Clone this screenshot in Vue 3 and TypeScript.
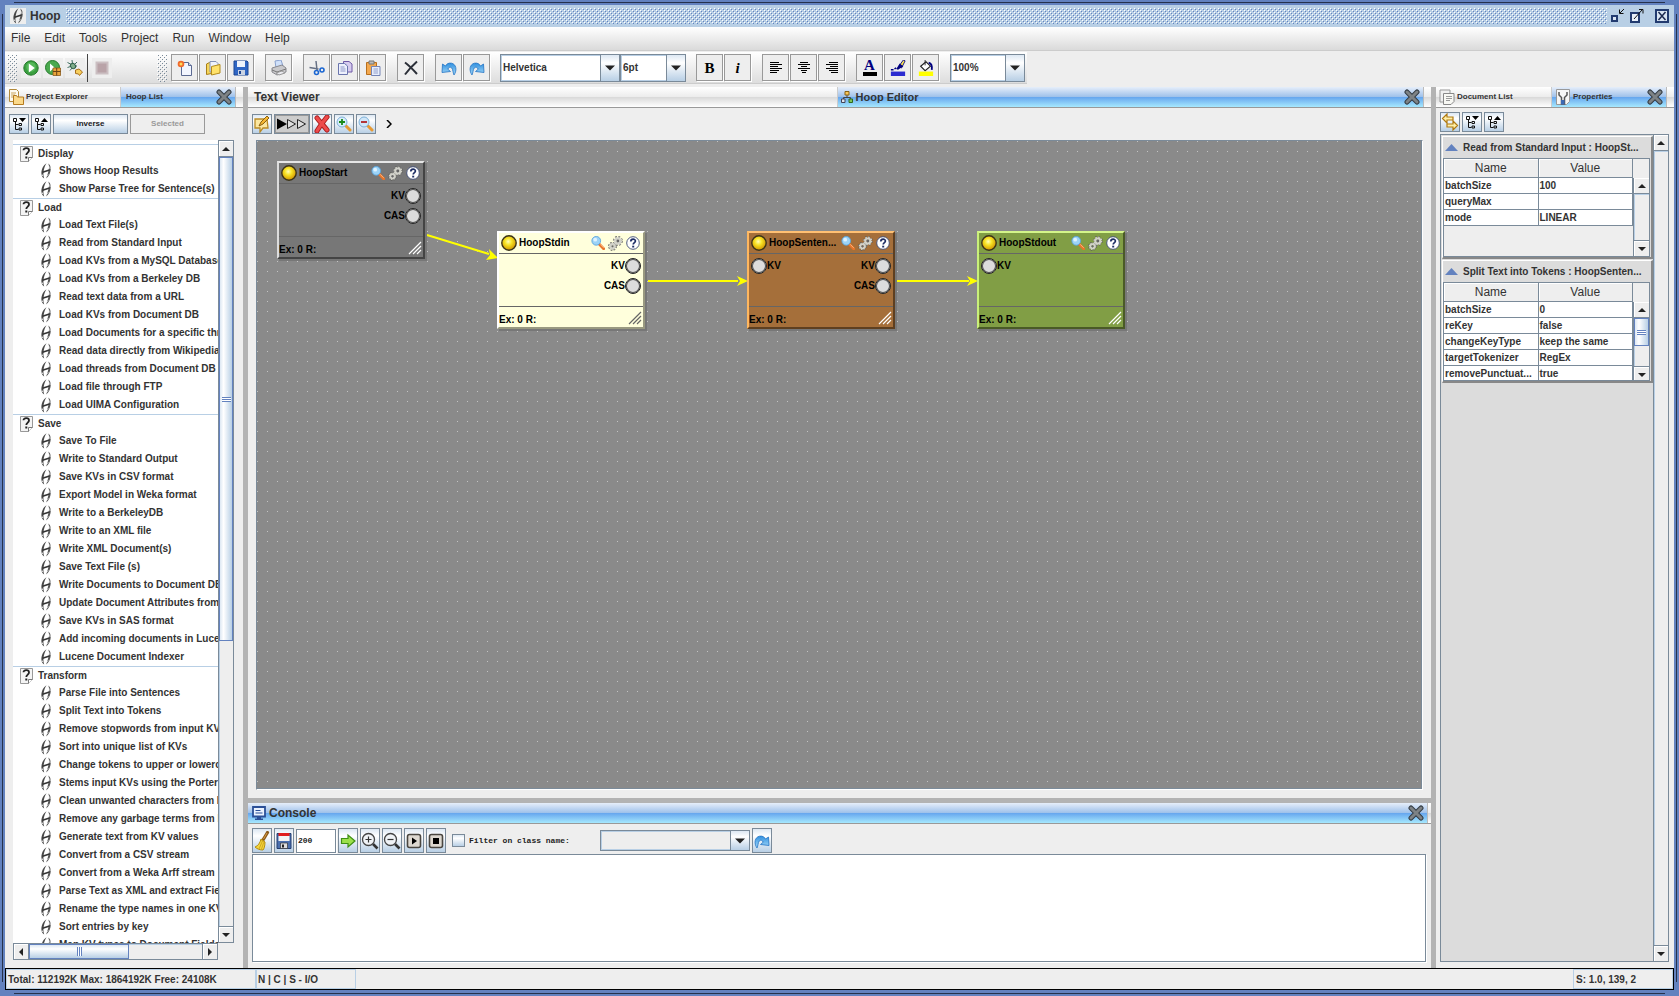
<script setup lang="ts">
import { ref } from 'vue'

interface Group { name: string; items: string[] }
interface HoopNode { id: string; name: string; x: number; y: number; theme: string; inputs: string[]; outputs: string[] }
interface Sheet { title: string; rows: [string, string][]; thumb: boolean }

const menus = ['File', 'Edit', 'Tools', 'Project', 'Run', 'Window', 'Help']

const groups: Group[] = [
  { name: 'Display', items: ['Shows Hoop Results', 'Show Parse Tree for Sentence(s)'] },
  {
    name: 'Load',
    items: ['Load Text File(s)', 'Read from Standard Input', 'Load KVs from a MySQL Database', 'Load KVs from a Berkeley DB',
      'Read text data from a URL', 'Load KVs from Document DB', 'Load Documents for a specific thread', 'Read data directly from Wikipedia',
      'Load threads from Document DB', 'Load file through FTP', 'Load UIMA Configuration'],
  },
  {
    name: 'Save',
    items: ['Save To File', 'Write to Standard Output', 'Save KVs in CSV format', 'Export Model in Weka format', 'Write to a BerkeleyDB',
      'Write to an XML file', 'Write XML Document(s)', 'Save Text File (s)', 'Write Documents to Document DB',
      'Update Document Attributes from KVs', 'Save KVs in SAS format', 'Add incoming documents in Lucene', 'Lucene Document Indexer'],
  },
  {
    name: 'Transform',
    items: ['Parse File into Sentences', 'Split Text into Tokens', 'Remove stopwords from input KVs', 'Sort into unique list of KVs',
      'Change tokens to upper or lowercase', 'Stems input KVs using the Porter', 'Clean unwanted characters from KVs',
      'Remove any garbage terms from KVs', 'Generate text from KV values', 'Convert from a CSV stream', 'Convert from a Weka Arff stream',
      'Parse Text as XML and extract Fields', 'Rename the type names in one KV', 'Sort entries by key', 'Map KV types to Document Fields'],
  },
]

const fileTools = [
  [['new', 'New'], ['open', 'Open'], ['save', 'Save']],
  [['print', 'Print']],
  [['cut', 'Cut'], ['copy', 'Copy'], ['paste', 'Paste']],
  [['delete', 'Delete']],
]
const textTools = [
  [['bold', 'Bold'], ['italic', 'Italic']],
  [['al', 'Align left'], ['ac', 'Align center'], ['ar', 'Align right']],
  [['fcolor', 'Font color'], ['pen', 'Highlight'], ['fill', 'Fill']],
]

const nodes: HoopNode[] = [
  { id: 'a', name: 'HoopStart', x: 20, y: 20, theme: 'gray', inputs: [], outputs: ['KV', 'CAS'] },
  { id: 'b', name: 'HoopStdin', x: 240, y: 90, theme: 'cream', inputs: [], outputs: ['KV', 'CAS'] },
  { id: 'c', name: 'HoopSenten...', x: 490, y: 90, theme: 'brown', inputs: ['KV'], outputs: ['KV', 'CAS'] },
  { id: 'd', name: 'HoopStdout', x: 720, y: 90, theme: 'green', inputs: ['KV'], outputs: [] },
]

const sheets: Sheet[] = [
  { title: 'Read from Standard Input : HoopSt...', rows: [['batchSize', '100'], ['queryMax', ''], ['mode', 'LINEAR']], thumb: false },
  {
    title: 'Split Text into Tokens : HoopSenten...',
    rows: [['batchSize', '0'], ['reKey', 'false'], ['changeKeyType', 'keep the same'], ['targetTokenizer', 'RegEx'], ['removePunctuat...', 'true']],
    thumb: true,
  },
]

const lines = ref('200')
const filterOn = ref(false)
</script>

<template>
  <svg class="defs" aria-hidden="true">
    <defs>
      <radialGradient id="lampFill" cx=".45" cy=".4" r=".6"><stop offset="0" stop-color="#fffdb8" /><stop offset=".4" stop-color="#f8e425" /><stop offset="1" stop-color="#cf9200" /></radialGradient>
      <linearGradient id="arrowBlue" x2="0" y2="1"><stop offset="0" stop-color="#2f8fdf" /><stop offset="1" stop-color="#a8dcfa" /></linearGradient>
    </defs>
    <symbol id="hoop" viewBox="0 0 10 16">
      <path d="M5.500.300C2 2.500.2 7 .4 10.500.5 13 1.800 15 3.200 15.500 2.300 13 2.300 10.500 2.600 8.500 3 5.500 4 2.500 5.500.300z" fill="#484848" />
      <path d="M7.200.600C9.800 2.200 10.200 5.500 9.400 8.500 8.700 11.500 7 14.200 5 15.600 6.200 13 6.800 10.500 7.400 8 8.200 5 8.400 2.800 7.200.600z" fill="#565656" />
      <path d="M1.500 9.300l7-2.300" stroke="#333" stroke-width="1.600" />
      <path d="M8.700 3.500l.4 2.500M7.300 11.500l-.8 1.300M1.300 11.500l.4 1.500" stroke="#fff" stroke-width=".8" fill="none" />
    </symbol>
    <symbol id="qdoc" viewBox="0 0 13 16">
      <path d="M.5.500h12v11l-4 4h-8z" fill="#f4f4f4" stroke="#999" /><path d="M8.500 15.500v-4h4" fill="#fff" stroke="#777" />
      <path d="M3.500 4.200C3.500 1.500 9 1.500 9 4.500 9 6.500 6.300 6.700 6.300 9" fill="none" stroke="#222" stroke-width="1.800" /><path d="M5.300 10.500h2v2h-2z" fill="#222" />
    </symbol>
    <symbol id="run" viewBox="0 0 16 16"><circle cx="8" cy="8" r="7.200" fill="#3a9f3f" stroke="#257a2b" /><circle cx="8" cy="7" r="4.800" fill="#55b85a" /><path d="M5.800 3.500L11.800 8l-6 4.500z" fill="#fff" /></symbol>
    <symbol id="runbox" viewBox="0 0 16 16"><circle cx="7.500" cy="7.500" r="7" fill="#4aa94e" stroke="#257a2b" /><path d="M5 3.500L9.500 7.500 5 11.500z" fill="#fff" /><path d="M8 8h7.500v7.500H8z" fill="#e8a33a" stroke="#8a5a1c" stroke-width=".8" /><path d="M8 11.500h7.500M11.700 8v7.500" stroke="#6a4213" /></symbol>
    <symbol id="bug" viewBox="0 0 16 16"><path d="M.5 2.500l4 2M5 0l.5 4M10 2L7 5M.5 7.500l3-1M3 10.500l2-2.500M10 6H7" stroke="#3f6f60" /><ellipse cx="6" cy="6" rx="2.400" ry="2.800" transform="rotate(-40 6 6)" fill="#7fae8a" stroke="#2f5f4a" /><path d="M8.500 10L12 9l3.500 3-3 3.500-1-1.500-3-.5z" fill="#f7cf5e" stroke="#a8701c" /></symbol>
    <symbol id="stop" viewBox="0 0 16 16"><path d="M2.500 2.500h11v11h-11z" fill="#b9a3a8" stroke="#cbbfc2" stroke-width="2" /></symbol>
    <symbol id="new" viewBox="0 0 16 16"><path d="M4.500 2.500h7l3 3v10h-10z" fill="#f3f6ff" stroke="#5c6a92" /><path d="M11.500 2.500v3h3" fill="#cfd7ee" stroke="#5c6a92" /><circle cx="4" cy="4" r="3.300" fill="#f06a2c" /><circle cx="4" cy="4" r="1.500" fill="#ffd95a" /></symbol>
    <symbol id="open" viewBox="0 0 16 16"><path d="M1.500 4l3-1.500 2 1v10l-5 1z" fill="#f5d55a" stroke="#a87f1a" /><path d="M5 1.500h6l2 2V12H5z" fill="#eef2fb" stroke="#8592b5" /><path d="M6.500 6.500l8.500-2v8.500l-8.500 2z" fill="#ffe26a" stroke="#b38b1d" /></symbol>
    <symbol id="save" viewBox="0 0 16 16"><path d="M1 1h13l1 1v13H1z" fill="#2f66c4" stroke="#1d4693" /><path d="M4 1h8v6H4z" fill="#eef3fb" /><path d="M5 10h7v5H5z" fill="#c9d3e3" /><path d="M6 11h2v3H6z" fill="#1d4693" /></symbol>
    <symbol id="print" viewBox="0 0 16 16"><path d="M4 1l6-1 2 6-7 2z" fill="#cfe0fa" stroke="#8aa2cf" /><path d="M1 8l10-3 4 3v4l-9 3-5-3z" fill="#c9c9cc" stroke="#88888e" /><path d="M1 10l5 2 9-3" fill="none" stroke="#777" /><path d="M5 13l6-2 3 2-6 2z" fill="#e9e9ee" stroke="#999" /></symbol>
    <symbol id="cut" viewBox="0 0 16 16"><path d="M7 1l1 9M.5 7.500l9 1.500" stroke="#667084" stroke-width="1.500" /><circle cx="7.500" cy="12.500" r="2" fill="none" stroke="#1c67d2" stroke-width="1.600" /><circle cx="13" cy="10" r="2" fill="none" stroke="#1c67d2" stroke-width="1.600" /></symbol>
    <symbol id="copy" viewBox="0 0 16 16"><path d="M6.500 1.500h5.500l3 2.500v8H6.500z" fill="#d6ccef" stroke="#6e58a6" /><path d="M1.500 3.500h6l3 2.500v8.500h-9z" fill="#edf0fc" stroke="#6a75ad" /><path d="M3.500 7h4M3.500 9h5M3.500 11h5" stroke="#8d97c9" /></symbol>
    <symbol id="paste" viewBox="0 0 16 16"><path d="M1.500 2.500h10v12h-10z" fill="#f3a84e" stroke="#b86f1d" /><path d="M4 1h5v3H4z" fill="#bbb" stroke="#777" /><path d="M6.500 6.500H15v9H6.500z" fill="#e8eefc" stroke="#7584b5" /><path d="M8.500 9h4.500M8.500 11h4.500M8.500 13h4.500" stroke="#93a0cc" /></symbol>
    <symbol id="delete" viewBox="0 0 16 16"><path d="M2 2.500c4 3 8 7 12 11.500M14 1.500C9 6 6 9 2 14.500" stroke="#2b2f38" stroke-width="2" fill="none" /></symbol>
    <symbol id="undo" viewBox="0 0 16 16"><path d="M13 15c3.500-5 2-11-2.500-11.800C7.500 2.700 5.500 4 4.500 6L1.500 4 1 12.500l8.500-1-2.700-2.300C7.500 7.200 9.500 6.500 10.800 8c1.300 1.700 1 4.500 2.200 7z" fill="url(#arrowBlue)" stroke="#2374c4" stroke-width=".8" /></symbol>
    <symbol id="redo" viewBox="0 0 16 16"><path d="M3 15C-.5 10 1 4 5.500 3.200 8.500 2.700 10.500 4 11.500 6l3-2 .5 8.500-8.500-1 2.700-2.300C8.500 7.200 6.500 6.500 5.200 8 3.900 9.700 4.200 12.500 3 15z" fill="url(#arrowBlue)" stroke="#2374c4" stroke-width=".8" /></symbol>
    <symbol id="al" viewBox="0 0 16 16"><path d="M2 2.500h9M2 4.500h12M2 6.500h8M2 8.500h12M2 10.500h9M2 12.500h7" stroke="#000" /></symbol>
    <symbol id="ac" viewBox="0 0 16 16"><path d="M4 2.500h8M2 4.500h12M5 6.500h6M2 8.500h12M5 10.500h6M6 12.500h4" stroke="#000" /></symbol>
    <symbol id="ar" viewBox="0 0 16 16"><path d="M5 2.500h9M2 4.500h12M6 6.500h8M2 8.500h12M5 10.500h9M7 12.500h7" stroke="#000" /></symbol>
    <symbol id="pen" viewBox="0 0 18 18"><path d="M10 7l5-7 2 1-4 8z" fill="#ffe94a" stroke="#000080" /><path d="M7 10l4-6 4 3-6 4z" fill="#000080" /><path d="M1 11h3M5 10l2-1" stroke="#000080" stroke-width="1.600" /><path d="M1 13h16v5H1z" fill="#2b2bd0" /></symbol>
    <symbol id="fill" viewBox="0 0 18 18"><path d="M3 7l6-5 5 5-6 5z" fill="#fff" stroke="#222" stroke-width="1.200" /><path d="M8 0v6" stroke="#222" /><path d="M12 3c4 1 4 4 3.500 8" fill="none" stroke="#000080" stroke-width="2" /><path d="M1 13h16v5H1z" fill="#ff0" /></symbol>
    <symbol id="folders" viewBox="0 0 16 16"><path d="M1.500.5h7l2 2v10h-9z" fill="#fdfaf0" stroke="#b38a3a" /><path d="M3 4h5M3 6h4M3 8h3" stroke="#c9a45a" /><path d="M5.500 6.500h3l1 1.500h6v7.500h-10z" fill="#fbd98a" stroke="#b57a1e" /></symbol>
    <symbol id="docs" viewBox="0 0 16 16"><path d="M1 1h10v12H1z" fill="#f0f0f0" stroke="#999" /><path d="M4.500 4.500H15v8l-3 3H4.500z" fill="#f8f8f4" stroke="#888" /><path d="M7 7.500h6M7 9.500h6M7 11.500h4" stroke="#999" /></symbol>
    <symbol id="wrench" viewBox="0 0 16 16"><path d="M1.500.5h13v12l-3 3h-10z" fill="#f6f6f6" stroke="#999" /><path d="M4 3v3l2.500 2.500V15h3V8.500L12 6V3" fill="none" stroke="#555" stroke-width="1.500" /><path d="M6 11h3.500v4.500H6z" fill="#3c6ab5" /></symbol>
    <symbol id="cross" viewBox="0 0 16 16"><path d="M3 3l10 10M13 3L3 13" stroke="#343c44" stroke-width="5" stroke-linecap="round" /><path d="M3 3l10 10M13 3L3 13" stroke="#7d8285" stroke-width="3" stroke-linecap="round" /></symbol>
    <symbol id="treed" viewBox="0 0 16 16"><path d="M2.500 2.500h3v3h-3zM4.500 6v7.500h3M4.500 8.500h3M8 7.500h2.500v2H8zM8 12h2.500v2H8z" fill="none" stroke="#111" /><path d="M8 2h7l-3.500 4z" fill="#000" /></symbol>
    <symbol id="treeu" viewBox="0 0 16 16"><path d="M2.500 2.500h3v3h-3zM4.500 6v7.500h3M4.500 8.500h3M8 7.500h2.500v2H8zM8 12h2.500v2H8z" fill="none" stroke="#111" /><path d="M8 6h7l-3.500-4z" fill="#000" /></symbol>
    <symbol id="swap" viewBox="0 0 18 18"><path d="M1.500 5.500L6 1v3h6v3H6v3zM16.500 12.500L12 8v3H6v3h6v3z" fill="#fff0a8" stroke="#b07a12" stroke-width="1.200" /></symbol>
    <symbol id="note" viewBox="0 0 18 18"><path d="M2 4h12l1 9h-5l-3 4v-4H2z" fill="#fbe7a0" stroke="#b98a26" stroke-width="1.300" /><path d="M6 11l2-4 6-6 2 2-6 6z" fill="#f5b732" stroke="#8a5f10" /></symbol>
    <symbol id="redx" viewBox="0 0 18 18"><path d="M4 3c3 4 7 8 10 12M14 2C10 7 7 11 4 16" stroke="#a81c1c" stroke-width="5" stroke-linecap="round" /><path d="M4 3c3 4 7 8 10 12M14 2C10 7 7 11 4 16" stroke="#ee4b4b" stroke-width="3.200" stroke-linecap="round" fill="none" /></symbol>
    <symbol id="mag" viewBox="0 0 16 16"><path d="M9.500 9.500l5 5" stroke="#e8742a" stroke-width="3.200" stroke-linecap="round" /><path d="M10.500 9.500l4 4" stroke="#ffc08a" /><circle cx="6" cy="5.500" r="5" fill="#9cd3f7" stroke="#5aa3dc" /><circle cx="4.800" cy="4.200" r="2.200" fill="#def2ff" /></symbol>
    <symbol id="zin" viewBox="0 0 16 16"><path d="M10 10l4 4" stroke="#e79a33" stroke-width="3" stroke-linecap="round" /><circle cx="6" cy="6" r="5" fill="#d8edfb" stroke="#7db0d8" /><path d="M3 6h6M6 3v6" stroke="#1a8a1a" stroke-width="1.800" /></symbol>
    <symbol id="zout" viewBox="0 0 16 16"><path d="M10 10l4 4" stroke="#e79a33" stroke-width="3" stroke-linecap="round" /><circle cx="6" cy="6" r="5" fill="#cfe6f8" stroke="#7db0d8" /><path d="M3 6h6" stroke="#b02222" stroke-width="1.800" /></symbol>
    <symbol id="gears" viewBox="0 0 16 16">
      <g fill="none" stroke="#5e5e5a"><circle cx="10.500" cy="5.300" r="4.300" stroke-width="2" stroke-dasharray="1.900 1.480" /><circle cx="4.800" cy="11" r="3.700" stroke-width="2" stroke-dasharray="1.700 1.200" /></g>
      <g fill="none" stroke="#d2d2ca"><circle cx="10.500" cy="5.300" r="3.900" stroke-width="1.600" stroke-dasharray="1.500 1.560" /><circle cx="10.500" cy="5.300" r="2.600" stroke-width="2.400" /><circle cx="4.800" cy="11" r="3.200" stroke-width="1.600" stroke-dasharray="1.300 1.210" /><circle cx="4.800" cy="11" r="2.200" stroke-width="2" /></g>
      <circle cx="10.500" cy="5.300" r="1.500" fill="#666" /><circle cx="4.800" cy="11" r="1.200" fill="#666" />
    </symbol>
    <symbol id="help" viewBox="0 0 14 14"><circle cx="7" cy="7" r="6.300" fill="#fff" stroke="#3c4a74" stroke-width=".9" /><path d="M4.800 5.500c0-3 4.600-3 4.600-.4C9.400 6.700 7.200 6.600 7.200 8.600" fill="none" stroke="#1f2f66" stroke-width="1.700" /><path d="M6.200 9.700h2v1.800h-2z" fill="#1f2f66" /></symbol>
    <symbol id="lamp" viewBox="0 0 16 16"><circle cx="8" cy="8" r="7.200" fill="url(#lampFill)" stroke="#3c3418" stroke-width="1.400" /></symbol>
    <symbol id="grip" viewBox="0 0 14 14"><path d="M1 13L13 1M5 13l8-8M9 13l4-4" stroke="currentColor" stroke-width="1.200" /></symbol>
    <symbol id="orgchart" viewBox="0 0 12 12"><path d="M6 4v2.500M2.500 8V6.500h7V8" fill="none" stroke="#444" /><path d="M4 .5h4v3.500H4z" fill="#f7c65a" stroke="#8a6212" /><path d="M.5 8H4v3.500H.5z" fill="#dfe6ee" stroke="#445" /><path d="M8 8h3.500v3.500H8z" fill="#7fc45a" stroke="#2d6a1d" /></symbol>
    <symbol id="monitor" viewBox="0 0 14 14"><path d="M1 1h12v9.500H1z" fill="#eaf2ff" stroke="#2b4f97" stroke-width="1.800" /><path d="M3.500 4.500h5M3.500 7h7" stroke="#2b4f97" /><path d="M5 11h4v1.500H5zM3 12.500h8V14H3z" fill="#2b4f97" /></symbol>
    <symbol id="broom" viewBox="0 0 16 20"><path d="M13.500 1.500L9 9" stroke="#8a5a1a" stroke-width="3.200" stroke-linecap="round" /><path d="M13 2L9.500 8" stroke="#d79b45" /><path d="M7 8l4 3c0 4-1 7-2 8-3 0-6-1-8-3 3-1 5-4 6-8z" fill="#f5d63a" stroke="#b58e10" /><path d="M8 11l-3 7M9.500 12l-2 6M7 9.500l4 2.500" stroke="#c79d1e" stroke-width=".8" /></symbol>
    <symbol id="disk" viewBox="0 0 16 18"><path d="M1 1.500h14v15H1z" fill="#4a6fae" stroke="#223c6e" /><path d="M2.500 1h11v3h-11z" fill="#e01b1b" /><path d="M2.500 4h11v5h-11z" fill="#f2f2f2" /><path d="M4.500 11h7v5.500h-7z" fill="#dcdcdc" stroke="#333" stroke-width=".7" /><path d="M6 12.500h2v3H6z" fill="#222" /></symbol>
    <symbol id="goright" viewBox="0 0 16 16"><path d="M1.500 5.500H8V2l7 6-7 6v-3.500H1.500z" fill="#9be04a" stroke="#3f8f14" stroke-width="1.200" /></symbol>
    <symbol id="gzin" viewBox="0 0 18 18"><path d="M12 12l4.500 4.500" stroke="#333" stroke-width="2.600" /><circle cx="7.500" cy="7.500" r="6" fill="#f0f3f6" stroke="#444" stroke-width="1.300" /><path d="M4.500 7.500h6M7.500 4.500v6" stroke="#333" stroke-width="1.200" /></symbol>
    <symbol id="gzout" viewBox="0 0 18 18"><path d="M12 12l4.500 4.500" stroke="#333" stroke-width="2.600" /><circle cx="7.500" cy="7.500" r="6" fill="#f0f3f6" stroke="#444" stroke-width="1.300" /><path d="M4.500 7.500h6" stroke="#333" stroke-width="1.200" /></symbol>
    <symbol id="bplay" viewBox="0 0 16 16"><rect x="1.500" y="1.500" width="13" height="13" rx="2" fill="#ddd8d0" stroke="#4a4640" stroke-width="1.600" /><path d="M6 4.500l5 3.500-5 3.500z" /></symbol>
    <symbol id="bstop" viewBox="0 0 16 16"><rect x="1.500" y="1.500" width="13" height="13" rx="2" fill="#ddd8d0" stroke="#4a4640" stroke-width="1.600" /><path d="M5 5h6v6H5z" /></symbol>
    <symbol id="steps" viewBox="0 0 32 16"><path d="M1 2.500l10 5.500-10 5.500z" /><path d="M11.500 3.500l8 4.500-8 4.500zM21.500 3.500l8 4.500-8 4.500z" fill="#ddd" stroke="#222" /></symbol>
    <symbol id="minimize" viewBox="0 0 16 16"><path d="M2 8h5v5H2z" fill="#d7e3f2" stroke="#223b70" stroke-width="2" /><path d="M14 1l-4 4M9.500 1.500v4h4" fill="none" stroke="#111" /></symbol>
    <symbol id="maximize" viewBox="0 0 16 16"><path d="M2 5h8v9H2z" fill="#e8f0fa" stroke="#223b70" stroke-width="2" /><path d="M5 11l8-9M10 1.500h4v4" fill="none" stroke="#111" /></symbol>
    <symbol id="winclose" viewBox="0 0 16 16"><path d="M2 2h12v12H2z" fill="#d9e5f3" stroke="#223b70" stroke-width="2" /><path d="M4.500 4l7 8M11.500 4l-7 8" stroke="#1c2a50" stroke-width="1.500" /></symbol>
    <symbol id="up" viewBox="0 0 8 4"><path d="M0 4l4-4 4 4z" fill="#222" /></symbol>
    <symbol id="down" viewBox="0 0 8 4"><path d="M0 0l4 4 4-4z" fill="#222" /></symbol>
  </svg>

  <div class="frame">
    <header class="title">
      <span class="logo"><svg width="10" height="16"><use href="#hoop" /></svg></span>
      <h1>Hoop</h1>
      <span class="bumps grow"></span>
      <button class="win" aria-label="Minimize"><svg width="16" height="16"><use href="#minimize" /></svg></button>
      <button class="win" aria-label="Maximize"><svg width="16" height="16"><use href="#maximize" /></svg></button>
      <button class="win last" aria-label="Close"><svg width="16" height="16"><use href="#winclose" /></svg></button>
    </header>

    <nav class="menubar"><button v-for="m in menus" :key="m">{{ m }}</button></nav>

    <div class="toolbars">
      <div class="runbar">
        <span class="bumps handle"></span>
        <button class="flat" aria-label="Run"><svg width="16" height="16"><use href="#run" /></svg></button>
        <button class="flat" aria-label="Run project"><svg width="16" height="16"><use href="#runbox" /></svg></button>
        <button class="flat" aria-label="Debug"><svg width="16" height="16"><use href="#bug" /></svg></button>
        <span class="sep"></span>
        <button class="flat" aria-label="Stop" disabled><svg width="16" height="16"><use href="#stop" /></svg></button>
      </div>
      <span class="bumps handle"></span>
      <div class="group" v-for="(g, i) in fileTools" :key="i">
        <button class="tool" v-for="t in g" :key="t[0]" :aria-label="t[1]"><svg width="16" height="16"><use :href="'#' + t[0]" /></svg></button>
      </div>
      <div class="group">
        <button class="tool" aria-label="Undo"><svg width="16" height="16"><use href="#undo" /></svg></button>
        <button class="tool" aria-label="Redo"><svg width="16" height="16"><use href="#redo" /></svg></button>
      </div>
      <div class="group tight">
        <label class="combo font"><select aria-label="Font"><option>Helvetica</option></select><span><svg width="10" height="6"><use href="#down" /></svg></span></label>
        <label class="combo size"><select aria-label="Font size"><option>6pt</option></select><span><svg width="10" height="6"><use href="#down" /></svg></span></label>
      </div>
      <div class="group" v-for="(g, i) in textTools" :key="'t' + i">
        <button class="tool" v-for="t in g" :key="t[0]" :aria-label="t[1]">
          <b v-if="t[0] === 'bold'" class="glyph">B</b>
          <b v-else-if="t[0] === 'italic'" class="glyph it">i</b>
          <b v-else-if="t[0] === 'fcolor'" class="glyph fc">A</b>
          <svg v-else width="16" height="16"><use :href="'#' + t[0]" /></svg>
        </button>
      </div>
      <label class="combo zoom"><select aria-label="Zoom"><option>100%</option></select><span><svg width="10" height="6"><use href="#down" /></svg></span></label>
    </div>

    <main class="panes">
      <section class="side left">
        <div class="tabs">
          <button class="tab small"><svg width="16" height="16"><use href="#folders" /></svg>Project Explorer</button>
          <button class="tab small plain on">Hoop List<svg class="x" width="16" height="16"><use href="#cross" /></svg></button>
          <span class="tab rest"></span>
        </div>
        <div class="bar">
          <button class="btn" aria-label="Collapse"><svg width="16" height="16"><use href="#treed" /></svg></button>
          <button class="btn" aria-label="Expand"><svg width="16" height="16"><use href="#treeu" /></svg></button>
          <button class="btn word">Inverse</button>
          <button class="btn word" disabled>Selected</button>
        </div>
        <div class="treebox">
          <ul class="tree">
            <li v-for="g in groups" :key="g.name">
              <div class="cat"><svg width="13" height="16"><use href="#qdoc" /></svg>{{ g.name }}</div>
              <ul>
                <li class="leaf" v-for="i in g.items" :key="i"><svg width="10" height="16"><use href="#hoop" /></svg>{{ i }}</li>
              </ul>
            </li>
          </ul>
          <div class="vscroll">
            <button aria-label="Scroll up"><svg width="8" height="4"><use href="#up" /></svg></button>
            <div class="track"><div class="thumb tall"><i></i></div></div>
            <button aria-label="Scroll down"><svg width="8" height="4"><use href="#down" /></svg></button>
          </div>
          <div class="hscroll">
            <button aria-label="Scroll left"><svg width="4" height="8" viewBox="0 0 4 8"><path d="M4 0v8L0 4z" fill="#222" /></svg></button>
            <div class="track"><div class="thumb"><i></i></div></div>
            <button aria-label="Scroll right"><svg width="4" height="8" viewBox="0 0 4 8"><path d="M0 0v8l4-4z" fill="#222" /></svg></button>
          </div>
        </div>
      </section>
      <div class="split"></div>

      <section class="center">
        <div class="editor">
          <div class="tabs">
            <button class="tab half">Text Viewer</button>
            <button class="tab half on ed"><svg width="12" height="12"><use href="#orgchart" /></svg>Hoop Editor<svg class="x" width="16" height="16"><use href="#cross" /></svg></button>
            <span class="tab rest"></span>
          </div>
          <div class="bar">
            <button class="btn" aria-label="Note"><svg width="18" height="18"><use href="#note" /></svg></button>
            <button class="btn steps" aria-label="Step"><svg width="32" height="16"><use href="#steps" /></svg></button>
            <button class="btn" aria-label="Remove"><svg width="18" height="18"><use href="#redx" /></svg></button>
            <button class="btn" aria-label="Zoom in"><svg width="16" height="16"><use href="#zin" /></svg></button>
            <button class="btn" aria-label="Zoom out"><svg width="16" height="16"><use href="#zout" /></svg></button>
            <svg class="more" width="6" height="8" viewBox="0 0 6 8"><path d="M1 0l4 4-4 4" fill="none" stroke="#000" stroke-width="1.500" /></svg>
          </div>
          <div class="canvas">
            <svg class="edges" width="100%" height="100%">
              <g stroke="#ff0" stroke-width="2"><path d="M170 94l62 19M391 140h90M640 140h72" /></g>
              <g fill="#ff0"><path d="M241 117l-12 2 4-5-1-6zM491 140l-11 5 3-5-3-5zM721 140l-11 5 3-5-3-5z" /></g>
            </svg>
            <article v-for="n in nodes" :key="n.id" class="node" :class="n.theme" :style="{ left: n.x + 'px', top: n.y + 'px' }">
              <div class="nhead">
                <svg width="16" height="16"><use href="#lamp" /></svg><span>{{ n.name }}</span>
                <svg width="14" height="14"><use href="#mag" /></svg>
                <svg width="15" height="15"><use href="#gears" /></svg>
                <svg width="14" height="14"><use href="#help" /></svg>
              </div>
              <div class="nbody">
                <div class="ports"><span v-for="p in n.inputs" :key="p"><i></i>{{ p }}</span></div>
                <div class="ports out"><span v-for="p in n.outputs" :key="p">{{ p }}<i></i></span></div>
              </div>
              <div class="nfoot">Ex: 0 R:<svg width="14" height="14"><use href="#grip" /></svg></div>
            </article>
          </div>
        </div>
        <div class="split"></div>
        <div class="console">
          <div class="tabs">
            <button class="tab on wide"><svg width="14" height="14"><use href="#monitor" /></svg>Console<svg class="x" width="16" height="16"><use href="#cross" /></svg></button>
            <span class="tab rest thin"></span>
          </div>
          <div class="bar cbar">
            <button class="btn" aria-label="Clear"><svg width="16" height="20"><use href="#broom" /></svg></button>
            <button class="btn" aria-label="Save log"><svg width="16" height="18"><use href="#disk" /></svg></button>
            <input class="lines" aria-label="Lines" v-model="lines">
            <button class="btn" aria-label="Apply"><svg width="16" height="16"><use href="#goright" /></svg></button>
            <button class="btn" aria-label="Larger text"><svg width="18" height="18"><use href="#gzin" /></svg></button>
            <button class="btn" aria-label="Smaller text"><svg width="18" height="18"><use href="#gzout" /></svg></button>
            <button class="btn" aria-label="Play"><svg width="16" height="16"><use href="#bplay" /></svg></button>
            <button class="btn" aria-label="Stop log"><svg width="16" height="16"><use href="#bstop" /></svg></button>
            <label class="check"><input type="checkbox" v-model="filterOn">Filter on class name:</label>
            <label class="combo cls"><select aria-label="Class name"><option></option></select><span><svg width="10" height="6"><use href="#down" /></svg></span></label>
            <button class="btn" aria-label="Refresh"><svg width="16" height="16"><use href="#redo" /></svg></button>
          </div>
          <textarea aria-label="Console output" readonly></textarea>
        </div>
      </section>
      <div class="split"></div>

      <section class="side right">
        <div class="tabs">
          <button class="tab small"><svg width="16" height="16"><use href="#docs" /></svg>Document List</button>
          <button class="tab small on"><svg width="16" height="16"><use href="#wrench" /></svg>Properties<svg class="x" width="16" height="16"><use href="#cross" /></svg></button>
          <span class="tab rest"></span>
        </div>
        <div class="bar rbar">
          <button class="btn" aria-label="Swap"><svg width="18" height="18"><use href="#swap" /></svg></button>
          <button class="btn" aria-label="Collapse all"><svg width="16" height="16"><use href="#treed" /></svg></button>
          <button class="btn" aria-label="Expand all"><svg width="16" height="16"><use href="#treeu" /></svg></button>
        </div>
        <div class="props">
          <div class="sheets">
            <section class="sheet" v-for="s in sheets" :key="s.title">
              <h2><svg width="13" height="7" viewBox="0 0 13 7"><path d="M0 7l6.500-7L13 7z" fill="#6382bf" /></svg>{{ s.title }}</h2>
              <div class="grid">
                <table>
                  <thead><tr><th>Name</th><th>Value</th></tr></thead>
                  <tbody><tr v-for="r in s.rows" :key="r[0]"><td>{{ r[0] }}</td><td>{{ r[1] }}</td></tr></tbody>
                </table>
                <div class="vscroll">
                  <button aria-label="Scroll up"><svg width="8" height="4"><use href="#up" /></svg></button>
                  <div class="track"><div v-if="s.thumb" class="thumb short"><i></i></div></div>
                  <button aria-label="Scroll down"><svg width="8" height="4"><use href="#down" /></svg></button>
                </div>
              </div>
            </section>
          </div>
          <div class="vscroll">
            <button aria-label="Scroll up"><svg width="8" height="4"><use href="#up" /></svg></button>
            <div class="track"></div>
            <button aria-label="Scroll down"><svg width="8" height="4"><use href="#down" /></svg></button>
          </div>
        </div>
      </section>
    </main>

    <footer class="status">
      <span class="mem">Total: 112192K Max: 1864192K Free: 24108K</span><span class="io">N | C | S - I/O</span><span class="grow none"></span><span class="scale">S: 1.0, 139, 2</span>
    </footer>
  </div>
</template>

<style>
body { margin: 0; }
</style>
<style scoped>
* { box-sizing: border-box; }
svg { display: block; flex: none; }
button, select, input, textarea { font: inherit; color: inherit; margin: 0; padding: 0; border-radius: 0; }
button { cursor: default; }
ul { list-style: none; margin: 0; padding: 0; }
.defs { position: absolute; width: 0; height: 0; }
.grow { flex: 1; }

.frame {
  height: 100vh; display: flex; flex-direction: column; overflow: hidden;
  padding: 5px 5px 6px;
  font: bold 10px/14px "Liberation Sans", Arial, sans-serif; color: #333;
  background:
    linear-gradient(#eee, #eee) 5px 5px / calc(100% - 10px) calc(100% - 11px) no-repeat,
    linear-gradient(#26324c, #26324c) 14px 2px / calc(100% - 28px) 1px no-repeat,
    linear-gradient(#26324c, #26324c) 14px calc(100% - 2px) / calc(100% - 28px) 1px no-repeat,
    linear-gradient(#26324c, #26324c) 2px 14px / 1px calc(100% - 28px) no-repeat,
    linear-gradient(#26324c, #26324c) calc(100% - 2px) 14px / 1px calc(100% - 28px) no-repeat,
    #6382bf;
}

.title { height: 22px; flex: none; display: flex; align-items: center; background: #b8cfe5; padding: 0 4px 0 5px; }
.logo { width: 16px; height: 16px; background: #eee; display: flex; justify-content: center; }
.title h1 { font-size: 12px; line-height: 16px; margin: 0 5px 0 4px; }
.bumps {
  align-self: center; height: 16px;
  --w: conic-gradient(from 270deg at 1px 1px, #fff 90deg, transparent 0);
  --b: conic-gradient(from 270deg at 1px 1px, #6382bf 90deg, transparent 0);
  background: var(--w) 0 0 / 4px 4px, var(--w) 2px 2px / 4px 4px, var(--b) 1px 1px / 4px 4px, var(--b) 3px 3px / 4px 4px;
}
.win { width: 16px; height: 16px; border: 0; background: none; margin-left: 3px; }
.win.last { margin-left: 9px; }

.menubar { height: 24px; flex: none; display: flex; background: linear-gradient(#fff, #dadada); border-bottom: 1px solid #ccc; }
.menubar button { border: 0; background: none; font-size: 12px; font-weight: normal; padding: 0 8px 1px 6px; }

.toolbars { flex: none; height: 32px; margin: 1px 0 3px; display: flex; align-items: center; align-self: flex-start; padding-right: 2px; background: linear-gradient(#fff, #ddd); border-bottom: 1px solid #ccc; }
.toolbars .handle {
  width: 10px; height: 28px;
  --b: conic-gradient(from 270deg at 1px 1px, #7a8a99 90deg, transparent 0);
}
.runbar { display: flex; align-items: center; width: 150px; padding-left: 2px; margin-right: 2px; }
.flat { width: 20px; height: 20px; border: 0; background: #eee; display: grid; place-items: center; margin-left: 2px; }
.runbar .handle { margin-right: 2px; }
.sep { width: 1px; height: 28px; background: #444; margin: 0 2px; }
.group { display: flex; gap: 1px; margin-left: 11px; }
.handle + .group { margin-left: 4px; }
.group.tight { gap: 0; margin-left: 10px; }
.group.tight + .group { margin-left: 10px; }
.tool { width: 27px; height: 27px; display: grid; place-items: center; background: #eee; border: 1px solid #999; box-shadow: 1px 1px #fff; }
.glyph { font: bold 15px/16px "Liberation Serif", serif; color: #000; }
.glyph.it { font-style: italic; }
.glyph.fc { color: #000080; width: 14px; line-height: 13px; border-bottom: 4px solid #000; }

.combo { display: grid; grid-template-columns: 1fr 20px; height: 28px; }
.combo select { grid-area: 1 / 1 / 2 / 3; appearance: none; background: #fff; border: 1px solid #7a8a99; box-shadow: inset 0 0 0 1px #b8cfe5; padding-left: 2px; outline: 0; border-radius: 0; }
.combo span { grid-area: 1 / 2; display: grid; place-items: center; pointer-events: none; border: 1px solid #7a8a99; background: linear-gradient(#dde8f3, #fff 30%, #b8cfe5); }
.font { width: 120px; }
.size { width: 66px; }
.zoom { width: 75px; margin-left: 11px; }

.panes { flex: 1; min-height: 0; display: grid; grid-template-columns: 238px 5px minmax(0, 1fr) 5px 238px; }
.split { background: #b3b3b3; }
.side, .editor, .console { display: flex; flex-direction: column; min-height: 0; }
.center { display: grid; grid-template-rows: minmax(0, 1fr) 5px 165px; min-width: 0; }

.tabs { display: flex; height: 21px; flex: none; border-bottom: 1px solid #999; }
.tab { display: flex; align-items: center; gap: 3px; padding: 0 3px 0 6px; border: 0; text-align: left; font-size: 12px; background: linear-gradient(#fff, #ececec 50%, #d9d9d9 51%, #fff); }
.tab.on { border-left: 1px solid #ccc; background: linear-gradient(#e6eefa, #9dc0ea 50%, #66a6ee 51%, #a6e8fe); }
.tab .x { margin-left: auto; }
.tab.small { width: 115px; gap: 2px; font-size: 8px; padding-left: 3px; }
.tab.small.plain { padding-left: 5px; }
.tab.rest { flex: none; width: 8px; padding: 0; border-left: 1px solid #bbb; }
.tab.half { flex: 1; }
.tab.ed { padding-left: 3px; font-size: 11px; }
.tab.wide { flex: 1; padding-left: 4px; border-left: 0; }
.tab.rest.thin { width: 4px; }

.bar { display: flex; flex: none; align-items: center; gap: 2px; padding: 6px 4px; color: #222; }
.btn { width: 20px; height: 20px; display: grid; place-items: center; border: 1px solid #7a8a99; background: linear-gradient(#dde8f3, #fff 30%, #b8cfe5); font-size: 8px; overflow: hidden; }
.btn.word { width: 75px; }
.btn.steps { width: 36px; background: #ccc; box-shadow: inset 0 0 0 1px #999; }
.btn:disabled { background: #eee; border-color: #999; color: #999; }
.more { margin-left: 8px; }
.rbar { padding: 4px 4px 2px; }
.cbar { padding: 4px 4px 1px; }
.cbar .btn { height: 25px; }

.treebox { flex: 1; min-height: 0; margin: 0 9px 8px 8px; display: grid; grid-template-columns: minmax(0, 1fr) 16px; grid-template-rows: minmax(0, 1fr) 17px; }
.tree { background: #fff; overflow: hidden; padding-top: 4px; white-space: nowrap; }
.cat, .leaf { height: 18px; display: flex; align-items: center; }
.cat { border-top: 1px solid #b8cfe5; padding-left: 7px; gap: 5px; }
.leaf { padding-left: 28px; gap: 8px; }

.vscroll, .hscroll { display: flex; background: #eee; border: 1px solid #7a8a99; }
.vscroll { flex-direction: column; }
.vscroll button, .hscroll button { flex: none; width: 14px; height: 15px; display: grid; place-items: center; border: 0; background: #eee; box-shadow: inset 1px 1px #fff; }
.vscroll button { width: 100%; }
.track { flex: 1; min-height: 0; background: #eee; box-shadow: inset 1px 1px #b8cfe5; }
.vscroll .track { border: solid #7a8a99; border-width: 1px 0; }
.hscroll .track { border: solid #7a8a99; border-width: 0 1px; }
.thumb { display: grid; place-items: center; border: 1px solid #6382bf; }
.vscroll .thumb { background: linear-gradient(90deg, #dde8f3, #fff 30%, #b8cfe5); width: 100%; }
.hscroll .thumb { background: linear-gradient(#dde8f3, #fff 30%, #b8cfe5); height: 100%; width: 58%; }
.thumb i { width: 9px; height: 5px; background: repeating-linear-gradient(#6382bf 0 1px, #fff 1px 2px); }
.hscroll .thumb i { width: 5px; height: 9px; background: repeating-linear-gradient(90deg, #6382bf 0 1px, #fff 1px 2px); }
.tall { height: 63%; }
.short { height: 28px; }

.canvas {
  position: relative; flex: 1; min-height: 0; margin: 0 8px 8px; overflow: hidden;
  border: 1px solid; border-color: #7a8a99 #fff #fff #7a8a99; box-shadow: inset -1px -1px #7a8a99;
  background: conic-gradient(from 270deg at 1px 1px, #c4c4c4 90deg, transparent 0) 0 0 / 10px 10px, #8a8a8a;
}
.edges { position: absolute; inset: 0; }
.node { position: absolute; width: 148px; height: 98px; display: flex; flex-direction: column; color: #000; border: 2px solid; box-shadow: 2px 2px #777; }
.gray { background: #777; border-color: #e6e6e6 #444 #444 #ddd; }
.cream { background: #ffffdc; border-color: #fff #999980 #999980 #fff; }
.brown { background: #a56f3a; border-color: #ffc073 #5e3f20 #5e3f20 #ffb75f; }
.green { background: #819e45; border-color: #d4f58a #4a5a27 #4a5a27 #c9f07a; }
.nhead { height: 21px; display: flex; align-items: center; padding: 0 3px 0 2px; border-bottom: 1px solid #666; }
.nhead span { flex: 1; margin-left: 2px; white-space: nowrap; }
.nhead svg + svg { margin-left: 3px; }
.nbody { flex: 1; display: flex; justify-content: space-between; padding: 4px 2px 0; }
.ports { display: flex; flex-direction: column; gap: 4px; }
.out { align-items: flex-end; }
.ports span { display: flex; align-items: center; height: 16px; }
.ports i { width: 16px; height: 16px; border: 1px solid #222; border-radius: 50%; background: #dcdcdc; box-shadow: inset 0 0 0 1px #555; }
.nfoot { height: 21px; display: flex; align-items: flex-end; justify-content: space-between; border-top: 1px solid #666; line-height: 14px; }
.nfoot svg { margin: 0 1px 2px 0; color: #fff; }
.cream .nfoot svg { color: #666; }

.lines { width: 40px; height: 24px; border: 1px solid #7a8a99; box-shadow: 1px 1px #fff; padding-left: 1px; font: bold 8px/12px "Liberation Mono", monospace; background: #fff; }
.check { display: flex; align-items: center; gap: 4px; margin-left: 4px; font: bold 8px/12px "Liberation Mono", monospace; width: 146px; white-space: nowrap; }
.check input { appearance: none; width: 13px; height: 13px; border: 1px solid #7a8a99; background: linear-gradient(#dde8f3, #fff 30%, #b8cfe5); }
.combo.cls { width: 150px; height: 21px; }
.cls select { background: #eee; }
.console textarea { flex: 1; margin: 0 5px 6px 4px; resize: none; border: 1px solid #7a8a99; box-shadow: 1px 1px #fff; background: #fff; outline: 0; }

.props { flex: 1; min-height: 0; margin: 0 5px 6px 4px; display: grid; grid-template-columns: minmax(0, 1fr) 15px; border: 1px solid #7a8a99; background: #dcdcdc; }
.props > .vscroll { border-width: 0 0 0 1px; }
.sheets { padding: 1px 0 0 1px; display: flex; flex-direction: column; gap: 1px; }
.sheet { border: solid; border-width: 1px 2px 2px 1px; border-color: #fff #888 #888 #fff; }
.sheet h2 { margin: 0; height: 21px; font-size: 10px; line-height: 22px; display: flex; align-items: center; gap: 5px; padding-left: 2px; white-space: nowrap; }
.grid { height: 99px; display: grid; grid-template-columns: minmax(0, 1fr) 16px; border: 1px solid #7a8a99; background: #eee; overflow: hidden; margin-right: 1px; }
.grid .vscroll { margin-top: 19px; min-height: 0; border-width: 0 0 0 1px; }
.sheet table { width: 100%; height: fit-content; table-layout: fixed; border-collapse: separate; border-spacing: 0; }
.sheet th { height: 19px; padding: 0; font-size: 12px; font-weight: normal; border: solid #7a8a99; border-width: 0 1px 1px 0; box-shadow: inset 1px 1px #fff; }
.sheet td { height: 16px; padding: 0 0 0 1px; background: #fff; border: solid #7a8a99; border-width: 0 1px 1px 0; white-space: nowrap; overflow: hidden; }

.status { flex: none; height: 22px; display: flex; align-items: stretch; background: #eee; border: 1px solid #000; }
.status span { border: 1px solid #b8cfe5; padding: 2px 1px; white-space: nowrap; line-height: 15px; }
.status .none { border: 0; }
.mem { width: 250px; }
.io { width: 100px; }
.status .scale { width: 100px; padding-left: 2px; }
</style>
